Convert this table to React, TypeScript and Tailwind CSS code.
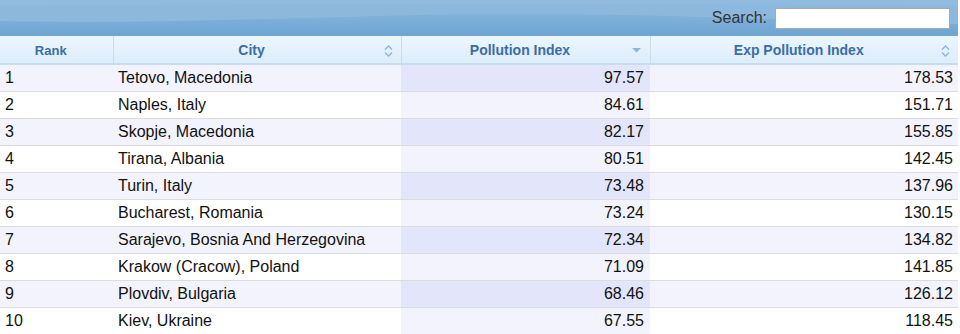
import React from "react";

const rows: [number, string, string, string][] = [
  [1, "Tetovo, Macedonia", "97.57", "178.53"],
  [2, "Naples, Italy", "84.61", "151.71"],
  [3, "Skopje, Macedonia", "82.17", "155.85"],
  [4, "Tirana, Albania", "80.51", "142.45"],
  [5, "Turin, Italy", "73.48", "137.96"],
  [6, "Bucharest, Romania", "73.24", "130.15"],
  [7, "Sarajevo, Bosnia And Herzegovina", "72.34", "134.82"],
  [8, "Krakow (Cracow), Poland", "71.09", "141.85"],
  [9, "Plovdiv, Bulgaria", "68.46", "126.12"],
  [10, "Kiev, Ukraine", "67.55", "118.45"],
];

function BothArrows() {
  return (
    <svg width="9" height="12" viewBox="0 0 9 12" className="block">
      <polyline points="1,4.5 4.5,1 8,4.5" fill="none" stroke="#8ab5df" strokeWidth="1.4" />
      <polyline points="1,7.5 4.5,11 8,7.5" fill="none" stroke="#8ab5df" strokeWidth="1.4" />
    </svg>
  );
}

function DownArrow() {
  return (
    <svg width="9" height="5" viewBox="0 0 9 5" className="block">
      <polygon points="0,0 9,0 4.5,4.5" fill="#8ab5df" />
    </svg>
  );
}

export default function App() {
  return (
    <div className="w-[958px] bg-white" style={{ fontFamily: '"Liberation Sans", Arial, sans-serif' }}>
      <div className="relative h-[36px] overflow-hidden bg-gradient-to-b from-[#8fbadf] to-[#6da5d1]">
        <svg className="absolute inset-0" width="958" height="36" viewBox="0 0 958 36" preserveAspectRatio="none">
          <path d="M0,0 L958,0 L958,24 C800,22 600,10 420,15 C260,19 120,24 0,21 Z" fill="#8cb8dd" />
          <path d="M0,0 L958,0 L958,6 C700,4 400,2 0,6 Z" fill="#90bbdf" />
        </svg>
        <div className="relative flex h-full items-center justify-end pr-[8px]">
          <span className="mr-[8px] text-[16px] text-[#333]">Search:</span>
          <input className="h-[21px] w-[175px] border border-[#a9a9a9] bg-white outline-none" />
        </div>
      </div>
      <table className="w-[958px] table-fixed border-collapse text-[16px] text-[#111]">
        <colgroup>
          <col className="w-[113px]" />
          <col className="w-[288px]" />
          <col className="w-[249px]" />
          <col className="w-[308px]" />
        </colgroup>
        <thead>
          <tr className="h-[28px] bg-gradient-to-b from-[#edf6fe] via-[#e4f1fd] to-[#dcedfb] text-[#3a6ea3]">
            <th className="border-r border-b-2 border-[#c6ddf0] p-0 pt-[2px] pr-[11px] text-center text-[13px] font-bold">Rank</th>
            <th className="border-r border-b-2 border-[#c6ddf0] p-0 pt-[2px] text-[14px] font-bold">
              <div className="relative flex items-center justify-center pr-[11px]">
                <span>City</span>
                <span className="absolute right-[8px]"><BothArrows /></span>
              </div>
            </th>
            <th className="border-r border-b-2 border-[#c6ddf0] p-0 pt-[2px] text-[14px] font-bold">
              <div className="relative flex items-center justify-center pr-[11px]">
                <span>Pollution Index</span>
                <span className="absolute right-[9px]"><DownArrow /></span>
              </div>
            </th>
            <th className="border-b-2 border-[#c6ddf0] p-0 pt-[2px] text-[14px] font-bold">
              <div className="relative flex items-center justify-center pr-[11px]">
                <span>Exp Pollution Index</span>
                <span className="absolute right-[8px]"><BothArrows /></span>
              </div>
            </th>
          </tr>
        </thead>
        <tbody>
          {rows.map(([rank, city, p, e], i) => {
            const odd = i % 2 === 0;
            return (
              <tr key={rank} className={`h-[27px] border-b border-[#dcdcdc] ${odd ? "bg-[#f3f3fd]" : "bg-white"}`}>
                <td className="px-[5px] py-0 text-left">{rank}</td>
                <td className="px-[5px] py-0 text-left">{city}</td>
                <td className={`px-[6px] py-0 text-right ${odd ? "bg-[#e3e5fb]" : "bg-[#f3f3fd]"}`}>{p}</td>
                <td className="px-[5px] py-0 text-right">{e}</td>
              </tr>
            );
          })}
        </tbody>
      </table>
    </div>
  );
}
